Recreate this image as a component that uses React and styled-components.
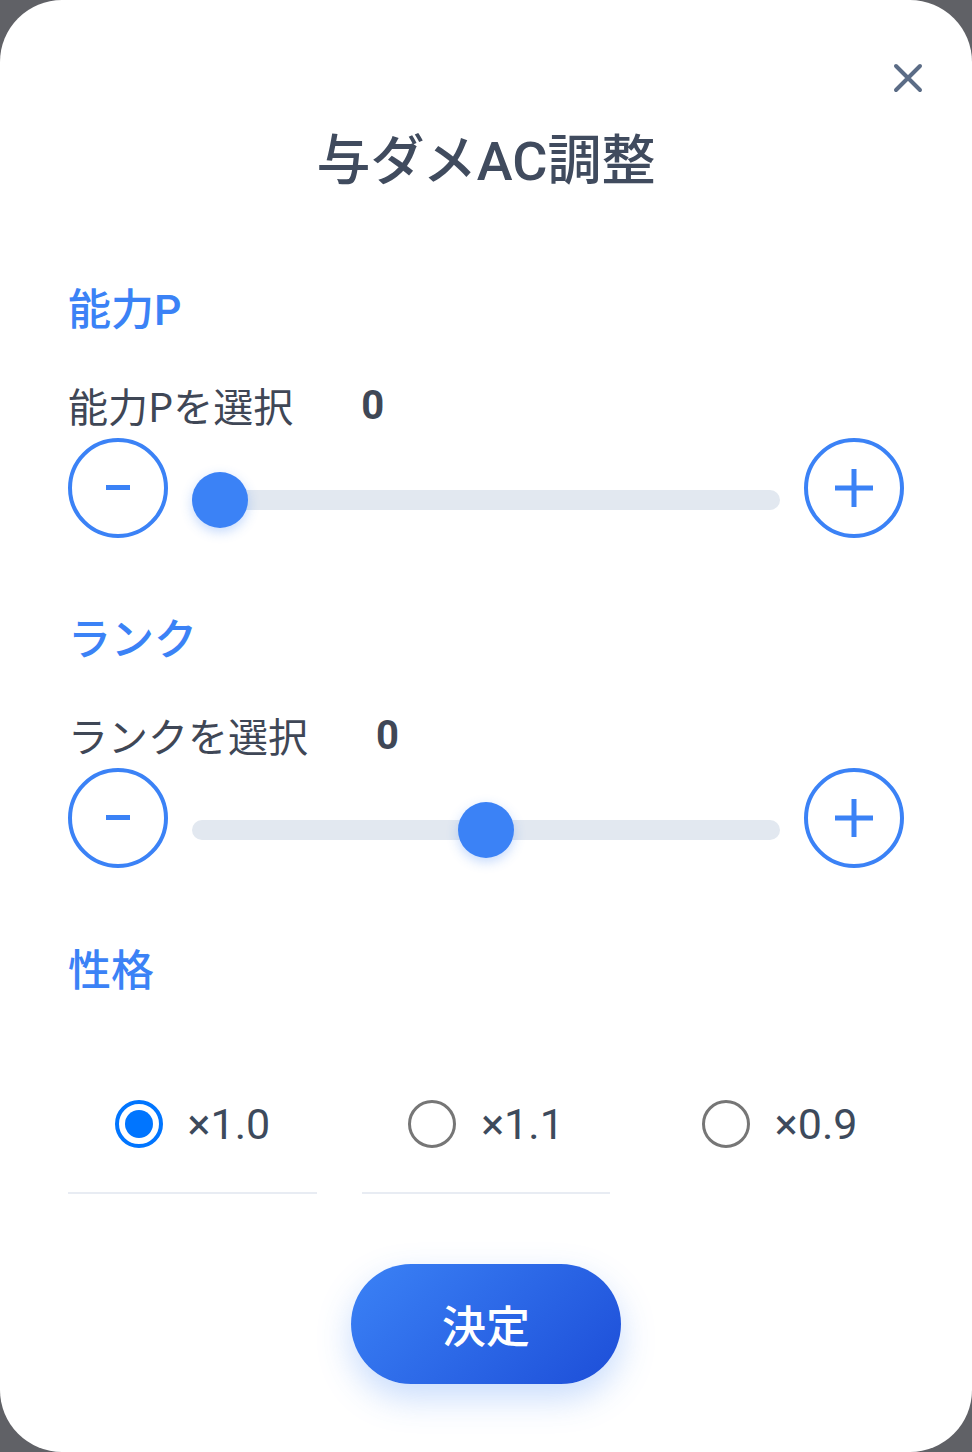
import React, { useState } from "react";
import styled, { createGlobalStyle } from "styled-components";

const GlobalStyle = createGlobalStyle`
  html, body {
    margin: 0;
    padding: 0;
    background: #606166;
  }
  * {
    box-sizing: border-box;
  }
`;

const Card = styled.div`
  position: relative;
  width: 972px;
  height: 1452px;
  background: white;
  border-radius: 62px;
  padding: 130px 68px 0;
  font-family: Roboto, "Noto Sans CJK JP", sans-serif;
  overflow: hidden;
`;

const Close = styled.button`
  position: absolute;
  top: 58px;
  right: 44px;
  width: 40px;
  height: 40px;
  padding: 0;
  border: none;
  background: none;
  cursor: pointer;
  display: flex;
  align-items: center;
  justify-content: center;
`;

const Title = styled.h1`
  margin: 0;
  text-align: center;
  font-family: Roboto, "Noto Sans CJK JP", sans-serif;
  font-size: 54px;
  line-height: 64px;
  font-weight: 500;
  color: #404b5e;
`;

const Heading = styled.h2`
  margin: ${(p) => p.$top}px 0 0;
  font-family: Roboto, "Noto Sans CJK JP", sans-serif;
  font-size: 43px;
  line-height: 50px;
  font-weight: 500;
  color: #3b82f6;
`;

const LabelRow = styled.div`
  display: flex;
  align-items: center;
  gap: ${(p) => p.$gap}px;
  margin-top: 45px;
  height: 50px;
`;

const Label = styled.span`
  font-family: "Noto Sans CJK JP", sans-serif;
  font-size: 40px;
  color: #3f4756;
`;

const Value = styled.span`
  font-family: Roboto, sans-serif;
  font-size: 40px;
  font-weight: 700;
  color: #3f4756;
`;

const SliderRow = styled.div`
  display: flex;
  align-items: center;
  gap: 24px;
  margin-top: 8px;
  height: 100px;
`;

const RoundButton = styled.button`
  flex: 0 0 100px;
  width: 100px;
  height: 100px;
  border-radius: 50%;
  border: 4px solid #3b82f6;
  background: white;
  padding: 0;
  display: flex;
  align-items: center;
  justify-content: center;
  cursor: pointer;
`;

const Track = styled.div`
  position: relative;
  flex: 1;
  height: 20px;
  margin-top: 24px;
  border-radius: 10px;
  background: #e2e8f0;
`;

const Thumb = styled.div`
  position: absolute;
  top: -18px;
  width: 56px;
  height: 56px;
  border-radius: 50%;
  background: #3b82f6;
  box-shadow: 0 4px 12px rgba(59, 130, 246, 0.3);
`;

const RadioGroup = styled.div`
  display: grid;
  grid-template-columns: repeat(3, 1fr);
  column-gap: 45px;
  margin-top: 60px;
`;

const Option = styled.label`
  display: flex;
  align-items: center;
  justify-content: center;
  gap: 25px;
  height: 138px;
  border-bottom: 2px solid ${(p) => (p.$line ? "#e8ecf3" : "transparent")};
  cursor: pointer;
`;

const RadioMark = styled.span`
  width: 48px;
  height: 48px;
  border-radius: 50%;
  border: ${(p) => (p.$checked ? "4px solid #0075ff" : "3px solid #767676")};
  display: flex;
  align-items: center;
  justify-content: center;

  &::after {
    content: "";
    display: ${(p) => (p.$checked ? "block" : "none")};
    width: 28px;
    height: 28px;
    border-radius: 50%;
    background: #0075ff;
  }
`;

const OptionText = styled.span`
  font-family: Roboto, sans-serif;
  font-size: 43px;
  color: #3d4a5c;
`;

const Footer = styled.div`
  display: flex;
  justify-content: center;
  margin-top: 70px;
`;

const Submit = styled.button`
  width: 270px;
  height: 120px;
  border: none;
  border-radius: 60px;
  background: linear-gradient(135deg, #3b82f6 0%, #1d4ed8 100%);
  box-shadow: 0 14px 34px rgba(59, 130, 246, 0.28);
  color: white;
  font-family: "Noto Sans CJK JP", sans-serif;
  font-size: 44px;
  font-weight: 500;
  cursor: pointer;
`;

const Minus = () => (
  <svg width="24" height="6" viewBox="0 0 24 6">
    <rect x="0" y="0" width="24" height="5" fill="#3b82f6" />
  </svg>
);

const Plus = () => (
  <svg width="38" height="38" viewBox="0 0 38 38">
    <rect x="0" y="16.5" width="38" height="5" fill="#3b82f6" />
    <rect x="16.5" y="0" width="5" height="38" fill="#3b82f6" />
  </svg>
);

const Slider = ({ label, value, min, max, gap, onChange }) => {
  const pct = (value - min) / (max - min);
  return (
    <>
      <LabelRow $gap={gap}>
        <Label>{label}</Label>
        <Value>{value}</Value>
      </LabelRow>
      <SliderRow>
        <RoundButton onClick={() => onChange(Math.max(min, value - 1))}>
          <Minus />
        </RoundButton>
        <Track>
          <Thumb style={{ left: `calc((100% - 56px) * ${pct})` }} />
        </Track>
        <RoundButton onClick={() => onChange(Math.min(max, value + 1))}>
          <Plus />
        </RoundButton>
      </SliderRow>
    </>
  );
};

const natures = ["×1.0", "×1.1", "×0.9"];

export default function App() {
  const [power, setPower] = useState(0);
  const [rank, setRank] = useState(0);
  const [nature, setNature] = useState(0);

  return (
    <>
      <GlobalStyle />
      <Card>
        <Close aria-label="close">
          <svg width="30" height="30" viewBox="0 0 30 30">
            <path
              d="M3 3 L27 27 M27 3 L3 27"
              stroke="#5b6c86"
              strokeWidth="4"
              strokeLinecap="round"
            />
          </svg>
        </Close>
        <Title>与ダメAC調整</Title>

        <Heading $top={91}>能力P</Heading>
        <Slider
          label="能力Pを選択"
          value={power}
          min={0}
          max={32}
          gap={68}
          onChange={setPower}
        />

        <Heading $top={77}>ランク</Heading>
        <Slider
          label="ランクを選択"
          value={rank}
          min={-6}
          max={6}
          gap={68}
          onChange={setRank}
        />

        <Heading $top={78}>性格</Heading>
        <RadioGroup>
          {natures.map((n, i) => (
            <Option key={n} $line={i < 2} onClick={() => setNature(i)}>
              <RadioMark $checked={nature === i} />
              <OptionText>{n}</OptionText>
            </Option>
          ))}
        </RadioGroup>

        <Footer>
          <Submit>決定</Submit>
        </Footer>
      </Card>
    </>
  );
}
